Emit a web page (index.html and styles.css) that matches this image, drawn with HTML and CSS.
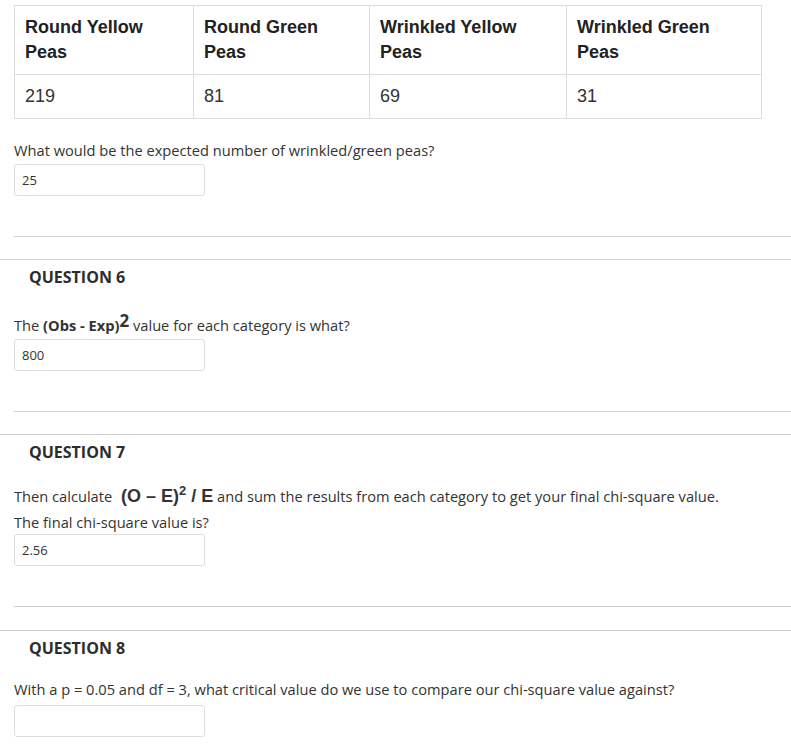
FILE: index.html
```html
<!DOCTYPE html>
<html lang="en">
<head>
<meta charset="utf-8">
<title>Chi-square questions</title>
<link rel="stylesheet" href="styles.css">
</head>
<body>
<div class="page">
  <section class="q first">
    <div class="inner">
      <table class="peas">
        <colgroup>
          <col class="c1"><col class="c2"><col class="c3"><col class="c4">
        </colgroup>
        <thead>
          <tr>
            <th>Round Yellow Peas</th>
            <th>Round Green Peas</th>
            <th>Wrinkled Yellow Peas</th>
            <th>Wrinkled Green Peas</th>
          </tr>
        </thead>
        <tbody>
          <tr>
            <td>219</td>
            <td>81</td>
            <td>69</td>
            <td>31</td>
          </tr>
        </tbody>
      </table>
      <p class="prompt first-prompt">What would be the expected number of wrinkled/green peas?</p>
      <input class="answer" type="text" value="25" readonly>
    </div>
  </section>

  <section class="q">
    <div class="inner">
      <h3 class="qtitle">QUESTION 6</h3>
      <p class="prompt raised">The <b>(Obs - Exp)</b><sup class="sq">2</sup> value for each category is what?</p>
      <input class="answer" type="text" value="800" readonly>
    </div>
  </section>

  <section class="q">
    <div class="inner">
      <h3 class="qtitle">QUESTION 7</h3>
      <p class="prompt formula-line">Then calculate <span class="formula">(O – E)<sup class="fsq">2</sup> / E</span> and sum the results from each category to get your final chi-square value.</p>
      <p class="prompt follow">The final chi-square value is?</p>
      <input class="answer tight" type="text" value="2.56" readonly>
    </div>
  </section>

  <section class="q last">
    <div class="inner">
      <h3 class="qtitle">QUESTION 8</h3>
      <p class="prompt">With a p = 0.05 and df = 3, what critical value do we use to compare our chi-square value against?</p>
      <input class="answer loose" type="text" value="" readonly>
    </div>
  </section>
</div>
</body>
</html>
```
FILE: styles.css
```css
html, body {
  margin: 0;
  padding: 0;
  background: #fff;
}

body {
  font-family: "Open Sans", "Liberation Sans", sans-serif;
  font-size: 14.65px;
  color: #333;
}

.page {
  padding-top: 5px;
}

.q + .q {
  margin-top: 22px;
  border-top: 1px solid #cfcfcf;
}

.q.last {
  margin-top: 23px;
}

.inner {
  margin-left: 14px;
  padding-bottom: 40px;
  border-bottom: 1px solid #cfcfcf;
}

.peas {
  border-collapse: collapse;
  table-layout: fixed;
  width: 747px;
  font-family: "Liberation Sans", Arial, sans-serif;
  font-size: 18px;
  line-height: 25px;
  color: #222;
}

.c1 { width: 179px; }
.c2 { width: 176px; }
.c3 { width: 197px; }
.c4 { width: 195px; }

.peas th,
.peas td {
  border: 1px solid #ddd;
  padding: 9px 10px;
  text-align: left;
  vertical-align: top;
}

.peas th {
  font-weight: bold;
}

.peas td {
  font-weight: normal;
  color: #333;
}

.qtitle {
  margin: 6px 0 0 15px;
  font-size: 16px;
  line-height: 22px;
  font-weight: 700;
  color: #2d2d2d;
}

.prompt {
  margin: 20px 0 0;
  line-height: 20px;
}

.first-prompt {
  margin-top: 21px;
}

.prompt.raised {
  margin-top: 27px;
}

.prompt.formula-line {
  margin-top: 23px;
}

.prompt.follow {
  margin-top: 6px;
}

.sq {
  font-size: 17px;
  font-weight: 700;
  line-height: 0;
  vertical-align: 4px;
}

.formula {
  font-family: "Liberation Sans", Arial, sans-serif;
  font-weight: 700;
  font-size: 18px;
  color: #333;
  margin-left: 5px;
}

.fsq {
  font-size: 13px;
  line-height: 0;
  vertical-align: 7px;
}

.answer {
  display: block;
  box-sizing: border-box;
  width: 191px;
  height: 32px;
  margin: 4px 0 0;
  padding: 0 7px;
  border: 1px solid #ddd;
  border-radius: 3px;
  background: #fff;
  font-family: "Open Sans", "Liberation Sans", sans-serif;
  font-size: 13px;
  color: #333;
  outline: none;
}

.answer.tight {
  margin-top: 2px;
}

.answer.loose {
  margin-top: 6px;
}
```
